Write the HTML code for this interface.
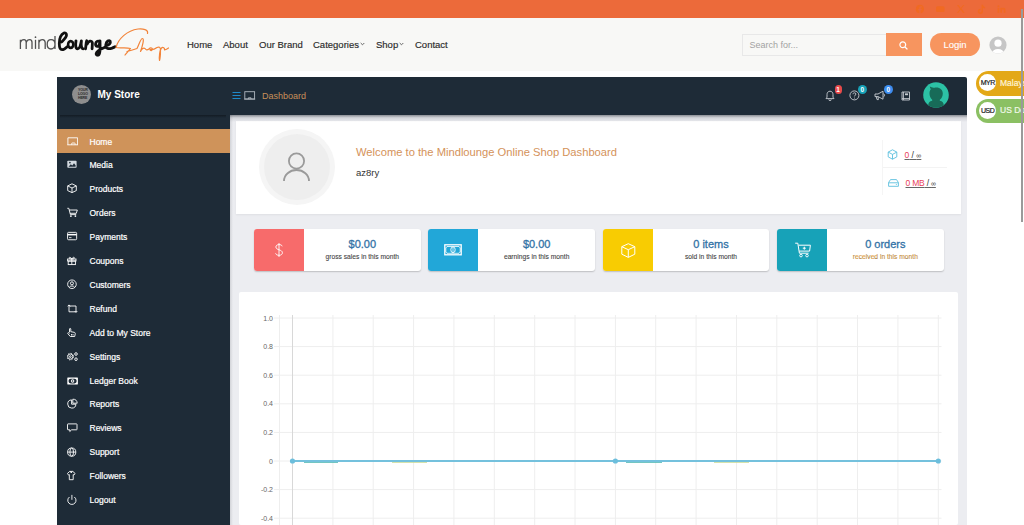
<!DOCTYPE html>
<html><head><meta charset="utf-8">
<style>
*{margin:0;padding:0;box-sizing:border-box}
html,body{width:1024px;height:525px;overflow:hidden;background:#fff;font-family:"Liberation Sans",sans-serif;position:relative}
.a{position:absolute}
.topbar{left:0;top:0;width:1024px;height:18px;background:#EC6A3A}
.header{left:0;top:18px;width:1024px;height:53px;background:#F8F8F6}
.nav{top:38.5px;font-size:9.5px;line-height:11px;color:#2a2a2a;white-space:nowrap;-webkit-text-stroke:0.15px #2a2a2a}
.dash{left:57px;top:77px;width:910px;height:448px;background:#1E2B37;border-radius:0 2px 0 0}
.content{left:230px;top:115px;width:737px;height:410px;background:#ECEDF1}
.side{left:57px;top:115px;width:173px;height:410px;background:#1E2B37}
.mi{left:0;width:173px;height:24px;color:#fff;font-size:8.5px;-webkit-text-stroke:0.2px #fff}
.mi span{position:absolute;left:32.5px;top:8.6px;line-height:1}
.mi svg{position:absolute;left:10px;top:6.5px}
.hl{background:#CF935A}
.card{background:#fff}
.val{top:237.7px;width:116.6px;text-align:center;font-size:11px;line-height:12px;color:#3272A6;-webkit-text-stroke:0.3px #3272A6}
.sub{top:252.5px;width:116.6px;text-align:center;font-size:6.7px;line-height:8px;color:#444;-webkit-text-stroke:0.1px #444}
.stc{box-shadow:0 1px 1px rgba(0,0,0,0.18)}
</style></head><body>
<div class="a topbar"></div>
<div class="a header"></div>
<!-- social -->
<svg class="a" style="left:910px;top:0" width="100" height="18" viewBox="910 0 100 18" fill="#F06A22">
<path d="M920 4.8a4.3 4.3 0 0 0-0.8 8.5v-3h-1.1V9h1.1V8c0-1.1 0.6-1.8 1.7-1.8h0.9v1.2h-0.6c-0.5 0-0.6 0.3-0.6 0.6V9h1.2l-0.2 1.3h-1v3a4.3 4.3 0 0 0-0.6-8.5z"/>
<rect x="936" y="6.3" width="8.6" height="5.8" rx="1.5"/>
<path d="M957 5h1.6l2.2 3 2.3-3h1.3l-2.9 3.6 3.2 4.3h-1.6l-2.4-3.2-2.5 3.2h-1.3l3.1-3.8z"/>
<path d="M981.5 4.8h1.5c0.2 1.3 1 2 2.1 2.1v1.5c-0.8 0-1.5-0.3-2.1-0.7v3.6a2.6 2.6 0 1 1-2.6-2.6v1.5a1.1 1.1 0 1 0 1.1 1.1z"/>
<path d="M997.6 7.8h1.7v5h-1.7z M998.45 5.2a0.95 0.95 0 1 1 0 1.9a0.95 0.95 0 1 1 0-1.9z M1000.3 7.8h1.6v0.7c0.3-0.5 0.9-0.8 1.6-0.8 1.3 0 1.9 0.8 1.9 2.3v2.8h-1.7v-2.5c0-0.6-0.2-1-0.8-1s-0.9 0.4-0.9 1v2.5h-1.7z"/>
</svg>

<!-- logo -->
<svg class="a" style="left:0;top:18px" width="180" height="52" viewBox="0 18 180 52">
<g fill="none" stroke="#505050" stroke-width="1.3">
<path d="M20.4 48.9V39.8M20.4 42.5C21 40.5 22.5 39.6 24 39.6C25.5 39.6 26.2 40.8 26.2 42.5V48.9M26.2 42.5C26.8 40.5 28.3 39.6 29.8 39.6C31.3 39.6 32 40.8 32 42.5V48.9"/>
<path d="M35.5 48.9V39.8"/>
<path d="M38.9 48.9V39.8M38.9 42.5C39.5 40.5 41 39.6 42.5 39.6C44.2 39.6 45.2 40.8 45.2 42.8V48.9"/>
<path d="M55 36V48.9M55 44.3C55 41.5 53.3 39.6 51 39.6C48.6 39.6 47.2 41.6 47.2 44.3C47.2 47 48.6 49 51 49C53.3 49 55 47 55 44.3"/>
</g>
<circle cx="35.5" cy="37.2" r="0.85" fill="#505050"/>
<g fill="none" stroke="#111" stroke-width="2.8" stroke-linecap="round" stroke-linejoin="round">
<path d="M61.5 42C63.5 40 66.5 37.5 66.5 35C66.5 33 65 32.5 64 33C61 34.5 59.3 39 59.3 43.5C59.3 47.5 60.5 49.7 62 49.7C63.5 49.7 65.5 48.5 67.5 46.5"/>
<ellipse cx="70.7" cy="44.5" rx="2.6" ry="3.4" stroke-width="2.6"/>
<path d="M76 40.8C75.5 44 75.3 48.8 77.6 48.8C79.8 48.8 80.8 44.5 81.4 40.8C81 44 81 48.8 83.4 48.8"/>
<path d="M85.5 48.8C86 46 86 42.5 86.7 40.8C87.3 42 87.2 43.5 87.2 44C88.2 41 91.8 39.8 92.4 43L92.1 48.8"/>
<path d="M99 41.2C95.5 40 94.4 46.3 97 46.3C98.8 46.3 99.8 43 100 40.8C100 44.5 100.4 50 99.6 53C98.7 56 95.8 55.8 96.2 53.4C96.7 50.8 101 49 105 47.2"/>
<path d="M106.3 45.3C109 45 111 43.2 110.2 41.2C109.3 39.6 106.2 41 105.8 44.8C105.4 48.4 108.2 49.5 112 48.1C113.5 47.5 114.5 47 115 46.7"/>
</g>
<path d="M147.5 33.5C148.5 29.5 143 28.5 138 29C127 30.5 118 39 116 47.5C120 48.5 126 47 130.5 48.5C128.5 51 126 53.5 125 55M127 51.5C131 50.5 134 49.5 137 48.5C139 45 140.5 38.5 142.5 38.5C144.5 38.5 142.5 46 140.5 51.5C142 48.5 143.5 47.5 145 48.5C146 50 147 50.5 149 49C150 47.5 152 47.5 152.5 49C152.5 51 150 51 150 49.5C152 50 155 49 157 47.5C159 46.5 160.5 47 160.5 50C160.5 54 160 59 159.5 60.5C159 58 159.5 50 161.5 48C163 46.5 165 48 164.5 50C166 49.5 167 49 168.5 48" fill="none" stroke="#F2843A" stroke-width="1.2" stroke-linecap="round" stroke-linejoin="round"/>
</svg>
<!-- nav -->
<div class="a nav" style="left:187px">Home</div>
<div class="a nav" style="left:223px">About</div>
<div class="a nav" style="left:259px">Our Brand</div>
<div class="a nav" style="left:313px">Categories</div>
<div class="a nav" style="left:376px">Shop</div>
<div class="a nav" style="left:415px">Contact</div>
<!-- search -->
<div class="a" style="left:742px;top:33.5px;width:145px;height:22.5px;background:#F8F8F6;border:1px solid #E8E8E8"></div>
<div class="a" style="left:749.5px;top:40px;font-size:9px;line-height:11px;color:#A2A2A2">Search for...</div>
<div class="a" style="left:886px;top:33.2px;width:35.5px;height:22.8px;background:#F7955F"></div>
<div class="a" style="left:930px;top:33px;width:50px;height:23px;background:#F7955F;border-radius:12px;color:#fff;font-size:9.5px;text-align:center;line-height:24px;-webkit-text-stroke:0.1px #fff">Login</div>
<svg class="a" style="left:989px;top:35.5px" width="18" height="18" viewBox="0 0 18 18"><defs><clipPath id="hc"><circle cx="9" cy="9" r="8.6"/></clipPath></defs><circle cx="9" cy="9" r="8.6" fill="#C6C6C6"/><g clip-path="url(#hc)" fill="#fff"><circle cx="9" cy="7.2" r="3.6"/><ellipse cx="9" cy="17.5" rx="6" ry="4.5"/></g></svg>
<svg class="a" style="left:899px;top:41px" width="9" height="9" viewBox="0 0 9 9"><circle cx="3.8" cy="3.8" r="2.9" fill="none" stroke="#fff" stroke-width="1.2"/><path d="M6 6l2.4 2.4" stroke="#fff" stroke-width="1.3"/></svg>
<svg class="a" style="left:360px;top:42px" width="5" height="4" viewBox="0 0 5 4"><path d="M0.7 1l1.8 1.8L4.3 1" fill="none" stroke="#555" stroke-width="0.9"/></svg>
<svg class="a" style="left:399px;top:42px" width="5" height="4" viewBox="0 0 5 4"><path d="M0.7 1l1.8 1.8L4.3 1" fill="none" stroke="#555" stroke-width="0.9"/></svg>
<!-- dashboard -->
<div class="a dash"></div>
<div class="a content"></div>
<div class="a side">
<div class="a" style="left:3px;top:0;width:166px;height:3px;background:linear-gradient(rgba(10,15,20,0.55),rgba(10,15,20,0))"></div>
<div class="a mi hl" style="top:14.00px"><svg width="11" height="12" viewBox="0 0 11 12"><path d="M0.9 8.8V1.8H10.6V8.8M0.3 8.8H11M4.7 8.8V7.6Q4.7 7 5.3 7H7.5Q8.1 7 8.1 7.6V8.8" fill="none" stroke="#fff" stroke-width="0.9"/></svg><span>Home</span></div>
<div class="a mi" style="top:37.90px"><svg width="11" height="12" viewBox="0 0 11 12"><rect x="0.3" y="1.8" width="9.3" height="7" rx="0.8" fill="#D3DAE0"/><path d="M1.5 7.8L3.8 5.2L5.3 6.4L7 4.2L8.6 6.2V7.8Z" fill="#1E2B37"/><circle cx="2.9" cy="3.6" r="0.85" fill="#1E2B37"/></svg><span>Media</span></div>
<div class="a mi" style="top:61.80px"><svg width="11" height="12" viewBox="0 0 11 12"><path d="M5 0.8L9.3 2.9V7.6L5 9.6L0.7 7.6V2.9Z M0.7 2.9L5 5L9.3 2.9M5 5V9.6" fill="none" stroke="#fff" stroke-width="0.9" stroke-linejoin="round"/></svg><span>Products</span></div>
<div class="a mi" style="top:85.70px"><svg width="11" height="12" viewBox="0 0 11 12"><path d="M0.3 1.3H1.8L3.4 7.6H9.2M2.3 3H10.3L9.3 6.3H3.1" fill="none" stroke="#fff" stroke-width="0.9"/><circle cx="3.9" cy="9.1" r="0.9" fill="#fff"/><circle cx="8.4" cy="9.1" r="0.9" fill="#fff"/></svg><span>Orders</span></div>
<div class="a mi" style="top:109.60px"><svg width="11" height="12" viewBox="0 0 11 12"><rect x="0.55" y="1.35" width="9.1" height="7.4" rx="1" fill="none" stroke="#fff" stroke-width="0.9"/><rect x="0.55" y="2.9" width="9.1" height="1.5" fill="#fff"/><rect x="2" y="6.3" width="2.5" height="0.8" fill="#fff"/></svg><span>Payments</span></div>
<div class="a mi" style="top:133.50px"><svg width="11" height="12" viewBox="0 0 11 12"><rect x="0.6" y="4" width="8.4" height="2" fill="none" stroke="#fff" stroke-width="0.9"/><rect x="1.2" y="6" width="7.2" height="3.6" fill="none" stroke="#fff" stroke-width="0.9"/><path d="M4.8 4V9.6M4.8 4C3.8 2 2 1.8 2.2 3.2C2.4 4 4 4 4.8 4C5.6 4 7.2 4 7.4 3.2C7.6 1.8 5.8 2 4.8 4" fill="none" stroke="#fff" stroke-width="0.9"/></svg><span>Coupons</span></div>
<div class="a mi" style="top:157.40px"><svg width="11" height="12" viewBox="0 0 11 12"><circle cx="4.95" cy="5.25" r="4.3" fill="none" stroke="#fff" stroke-width="0.9"/><circle cx="4.95" cy="4.3" r="1.5" fill="none" stroke="#fff" stroke-width="0.9"/><path d="M2.3 8.2C3 6.6 6.9 6.6 7.6 8.2" fill="none" stroke="#fff" stroke-width="0.9"/></svg><span>Customers</span></div>
<div class="a mi" style="top:181.30px"><svg width="11" height="12" viewBox="0 0 11 12"><path d="M2 2V8.8H8.6M2.4 3H9V9.2" fill="none" stroke="#fff" stroke-width="0.9"/><path d="M0.7 3.3L2 1.9L3.3 3.3M7.7 8L9 9.4L10.3 8" fill="none" stroke="#fff" stroke-width="0.9"/></svg><span>Refund</span></div>
<div class="a mi" style="top:205.20px"><svg width="11" height="12" viewBox="0 0 11 12"><path d="M2.5 5.4V2C2.5 1.2 3.8 1.2 3.8 2V4.7L7.1 5.3C8.1 5.5 8.4 6.1 8.2 7.1L7.7 9.5H3.3L0.9 6.7C0.4 6.1 1.1 5.3 1.8 5.8L2.5 6.5M4.5 7V8.5M6 7V8.5" fill="none" stroke="#fff" stroke-width="0.9"/></svg><span>Add to My Store</span></div>
<div class="a mi" style="top:229.10px"><svg width="11" height="12" viewBox="0 0 11 12"><circle cx="3.3" cy="5.6" r="2.6" fill="none" stroke="#fff" stroke-width="0.9"/><circle cx="3.3" cy="5.6" r="3.3" fill="none" stroke="#fff" stroke-width="1" stroke-dasharray="1.1 1.5"/><circle cx="3.3" cy="5.6" r="0.9" fill="none" stroke="#fff" stroke-width="0.9"/><circle cx="9" cy="3" r="1.3" fill="none" stroke="#fff" stroke-width="0.9"/><circle cx="9" cy="8.2" r="1.3" fill="none" stroke="#fff" stroke-width="0.9"/></svg><span>Settings</span></div>
<div class="a mi" style="top:253.00px"><svg width="11" height="12" viewBox="0 0 11 12"><rect x="0.3" y="2.6" width="10.6" height="6.9" rx="0.4" fill="#fff"/><rect x="1.5" y="3.7" width="8.2" height="4.7" rx="2.3" fill="#1E2B37"/><circle cx="5.6" cy="6.05" r="1.7" fill="#fff"/><circle cx="5.6" cy="6.05" r="0.8" fill="#1E2B37"/></svg><span>Ledger Book</span></div>
<div class="a mi" style="top:276.90px"><svg width="11" height="12" viewBox="0 0 11 12"><path d="M4.6 1.9A4.1 4.1 0 1 0 8.9 6.2H4.6Z" fill="none" stroke="#fff" stroke-width="0.9"/><path d="M5.8 1.2A4.3 4.3 0 0 1 10.2 5.2H5.8Z" fill="none" stroke="#fff" stroke-width="0.9"/></svg><span>Reports</span></div>
<div class="a mi" style="top:300.80px"><svg width="11" height="12" viewBox="0 0 11 12"><path d="M1 1.9H9.5Q10 1.9 10 2.4V7.3Q10 7.8 9.5 7.8H4.6L2.8 9.5V7.8H1Q0.5 7.8 0.5 7.3V2.4Q0.5 1.9 1 1.9Z" fill="none" stroke="#fff" stroke-width="0.9"/></svg><span>Reviews</span></div>
<div class="a mi" style="top:324.70px"><svg width="11" height="12" viewBox="0 0 11 12"><circle cx="4.7" cy="6.1" r="4.1" fill="none" stroke="#fff" stroke-width="0.9"/><ellipse cx="4.7" cy="6.1" rx="1.8" ry="4.1" fill="none" stroke="#fff" stroke-width="0.9"/><path d="M0.6 6.1H8.8" fill="none" stroke="#fff" stroke-width="0.9"/></svg><span>Support</span></div>
<div class="a mi" style="top:348.60px"><svg width="11" height="12" viewBox="0 0 11 12"><path d="M2.7 1.4H5.8L8.1 3.5L6.9 5.1L6.2 4.6V9.7H2.3V4.6L1.6 5.1L0.4 3.5Z" fill="none" stroke="#fff" stroke-width="0.9" stroke-linejoin="round"/><path d="M3.3 1.4L4.25 3L5.2 1.4" fill="none" stroke="#fff" stroke-width="0.9"/></svg><span>Followers</span></div>
<div class="a mi" style="top:372.50px"><svg width="11" height="12" viewBox="0 0 11 12"><path d="M4.9 0.9V5.8" fill="none" stroke="#fff" stroke-width="0.9"/><path d="M2.5 3A4.1 4.1 0 1 0 7.3 3" fill="none" stroke="#fff" stroke-width="0.9"/></svg><span>Logout</span></div>
</div>
<div class="a" style="left:71.8px;top:84.5px;width:19.5px;height:19.5px;border-radius:50%;background:#8E8E8E"></div>
<div class="a" style="left:78px;top:87.5px;width:7px;font-size:3.6px;line-height:4.4px;font-weight:bold;color:#2a2a2a;text-align:center;letter-spacing:-0.2px">YOUR<br>LOGO<br>HERE</div>
<svg class="a" style="left:232px;top:91px" width="10" height="9" viewBox="0 0 10 9"><path d="M0.5 1.5h8 M0.5 4.5h8 M0.5 7.5h8" stroke="#1E88C8" stroke-width="1.2"/></svg>
<svg class="a" style="left:244px;top:91px" width="12" height="9" viewBox="0 0 12 9"><rect x="0.8" y="0.7" width="9.8" height="7.3" fill="none" stroke="#B0B8C0" stroke-width="0.9"/><path d="M0.2 8.1h11 M4.4 8v-1.2h2.6v1.2" fill="none" stroke="#B0B8C0" stroke-width="0.9"/></svg>
<!-- bar icons -->
<svg class="a" style="left:825px;top:90px" width="10" height="11" viewBox="0 0 10 11"><path d="M5 1.2c-2 0-3 1.6-3 3.4v2.6L1 8.6h8L8 7.2V4.6C8 2.8 7 1.2 5 1.2z M3.8 9.4a1.2 1.2 0 0 0 2.4 0" fill="none" stroke="#C8CDD2" stroke-width="0.9"/></svg>
<div class="a" style="left:834.5px;top:85px;width:7px;height:9px;border-radius:3.5px;background:#E84A4A;color:#fff;font-size:6.5px;font-weight:bold;line-height:9px;text-align:center">1</div>
<svg class="a" style="left:849px;top:90px" width="11" height="11" viewBox="0 0 11 11"><circle cx="5.4" cy="5.4" r="4.5" fill="none" stroke="#C8CDD2" stroke-width="0.9"/><path d="M4 4.2c0-0.9 0.7-1.4 1.5-1.4s1.4 0.5 1.4 1.3c0 1.1-1.4 1.1-1.4 2.3" fill="none" stroke="#C8CDD2" stroke-width="0.9"/><circle cx="5.5" cy="7.9" r="0.5" fill="#C8CDD2"/></svg>
<div class="a" style="left:857.8px;top:85px;width:9.2px;height:9.2px;border-radius:50%;background:#17A2B8;color:#fff;font-size:6.5px;font-weight:bold;line-height:9.2px;text-align:center">0</div>
<svg class="a" style="left:874px;top:90px" width="12" height="11" viewBox="0 0 12 11"><path d="M1 4h3l5-2.8v8L4 6.6H1z M2.2 6.6l0.8 3h1.4L4 6.6 M9.5 3.8a1.6 1.6 0 0 1 0 3" fill="none" stroke="#C8CDD2" stroke-width="0.9"/></svg>
<div class="a" style="left:883.8px;top:85px;width:9.2px;height:9.2px;border-radius:50%;background:#3D8EF0;color:#fff;font-size:6.5px;font-weight:bold;line-height:9.2px;text-align:center">0</div>
<svg class="a" style="left:900.5px;top:90.5px" width="10" height="10" viewBox="0 0 10 10"><path d="M1 1h7.5v8H1z M2.4 1v8 M1 7.6h7.5" fill="none" stroke="#C8CDD2" stroke-width="0.9"/><rect x="4" y="2.4" width="3" height="1.8" fill="#C8CDD2"/></svg>
<svg class="a" style="left:923px;top:82px" width="26" height="26" viewBox="0 0 26 26"><defs><clipPath id="av"><circle cx="13" cy="13" r="12.8"/></clipPath></defs><circle cx="13" cy="13" r="12.8" fill="#2CC2A5"/><g clip-path="url(#av)" fill="#176B58"><path d="M6.8 4.6C8.5 5.8 10.5 5.9 12.5 5.5C16.5 5 19.8 7.5 19.8 11.5C19.8 14.5 18.5 16.5 16.8 17.8L16.8 18.8C19.5 19.3 20.8 21 20.8 23.5L20.8 27L5.2 27L5.2 23.5C5.2 21 6.5 19.3 9.2 18.8L9.2 17.8C7.5 16.5 6.5 14 6.5 11.5C6.5 9.5 7 8.2 7.8 7.2C7.2 6.4 6.9 5.5 6.8 4.6Z"/></g></svg>
<!-- currency pills -->
<div class="a" style="left:976px;top:71px;width:60px;height:25px;border-radius:12.5px;background:#E3A817"></div>
<div class="a" style="left:979.2px;top:74.3px;width:17px;height:17px;border-radius:50%;background:#fff;color:#222;font-size:7px;line-height:17px;text-align:center;letter-spacing:-0.5px;-webkit-text-stroke:0.2px #222">MYR</div>
<div class="a" style="left:1000px;top:78.5px;font-size:8.5px;line-height:8px;color:#FFF3D6;white-space:nowrap;-webkit-text-stroke:0.2px #FFF3D6">Malaysian</div>
<div class="a" style="left:976px;top:99px;width:60px;height:24px;border-radius:12px;background:#8BC063"></div>
<div class="a" style="left:979.2px;top:101.8px;width:17px;height:17px;border-radius:50%;background:#fff;color:#222;font-size:7px;line-height:17px;text-align:center;letter-spacing:-0.5px;-webkit-text-stroke:0.2px #222">USD</div>
<div class="a" style="left:1000px;top:105.5px;font-size:8.5px;line-height:8px;color:#F0F8E8;white-space:nowrap;-webkit-text-stroke:0.2px #F0F8E8">US Dollar</div>
<div class="a" style="left:1021px;top:9px;width:2px;height:213px;background:#9A9A9A"></div>
<div class="a" style="left:97.5px;top:89px;font-size:10px;font-weight:bold;color:#fff">My Store</div>
<div class="a" style="left:262px;top:91px;font-size:9px;color:#C8905A">Dashboard</div>
<!-- welcome card -->
<div class="a card" style="left:236px;top:121px;width:725px;height:93px;box-shadow:0 1px 2px rgba(0,0,0,0.06)"></div>
<div class="a" style="left:230px;top:115px;width:3px;height:410px;background:linear-gradient(90deg,rgba(20,25,35,0.12),rgba(20,25,35,0))"></div>
<div class="a" style="left:259px;top:129px;width:76px;height:76px;border-radius:50%;background:#F5F5F5"></div>
<div class="a" style="left:264px;top:134px;width:66px;height:66px;border-radius:50%;background:#EEEEEE"></div>
<div class="a" style="left:356px;top:146px;font-size:11.2px;color:#D4925A">Welcome to the Mindlounge Online Shop Dashboard</div>
<div class="a" style="left:356px;top:167px;font-size:9.5px;color:#333">az8ry</div>
<div class="a" style="left:230px;top:115px;width:737px;height:7px;background:linear-gradient(rgba(20,25,35,0.45),rgba(20,25,35,0.12) 40%,rgba(20,25,35,0))"></div>
<!-- stat cards -->
<div class="a card" style="left:254px;top:229px;width:166.6px;height:42px;border-radius:3px;box-shadow:0 1px 1.5px rgba(0,0,0,0.2)"></div>
<div class="a card" style="left:428.35px;top:229px;width:166.6px;height:42px;border-radius:3px;box-shadow:0 1px 1.5px rgba(0,0,0,0.2)"></div>
<div class="a card" style="left:602.7px;top:229px;width:166.6px;height:42px;border-radius:3px;box-shadow:0 1px 1.5px rgba(0,0,0,0.2)"></div>
<div class="a card" style="left:777.05px;top:229px;width:166.6px;height:42px;border-radius:3px;box-shadow:0 1px 1.5px rgba(0,0,0,0.2)"></div>

<!-- avatar person -->
<svg class="a" style="left:259px;top:129px" width="76" height="76" viewBox="0 0 76 76"><circle cx="37.5" cy="32" r="7.6" fill="none" stroke="#9A9A9A" stroke-width="1.8"/><path d="M25 52a12.5 11 0 0 1 25 0" fill="none" stroke="#9A9A9A" stroke-width="1.8"/></svg>
<!-- right stats -->
<div class="a" style="left:882px;top:140px;width:1px;height:55px;background:#F5F5F5"></div>
<div class="a" style="left:883px;top:167px;width:64px;height:1px;background:#F3F3F3"></div>
<svg class="a" style="left:887px;top:149px" width="11" height="11" viewBox="0 0 11 11"><path d="M5.5 0.8l4.3 2.3v4.8L5.5 10.2 1.2 7.9V3.1z M1.2 3.1l4.3 2.3 4.3-2.3 M5.5 5.4v4.8" fill="none" stroke="#5BC0DE" stroke-width="0.9"/></svg>
<svg class="a" style="left:887.5px;top:179px" width="11" height="8" viewBox="0 0 11 8"><path d="M0.6 3.5L2.5 0.6h6l1.9 2.9v3.8H0.6z M0.6 3.8h9.8" fill="none" stroke="#5BC0DE" stroke-width="0.9"/><circle cx="8.3" cy="5.6" r="0.5" fill="#5BC0DE"/></svg>
<div class="a" style="left:904.5px;top:151px;font-size:8.5px;line-height:1;color:#333;white-space:nowrap;text-decoration:underline;text-decoration-color:#666;text-underline-offset:1px;text-decoration-skip-ink:none"><span style="color:#E8415A">0</span> / <span style="font-size:7px">&#8734;</span></div>
<div class="a" style="left:905.5px;top:179px;font-size:8.5px;line-height:1;color:#333;white-space:nowrap;text-decoration:underline;text-decoration-color:#666;text-underline-offset:1px;text-decoration-skip-ink:none;letter-spacing:-0.2px"><span style="color:#E8415A">0 MB</span> / <span style="font-size:7px">&#8734;</span></div>
<!-- stat card colored blocks -->
<div class="a" style="left:254px;top:229px;width:50px;height:42px;background:#F76B6B;border-radius:3px 0 0 3px"></div>
<div class="a" style="left:428.35px;top:229px;width:50px;height:42px;background:#22A7D8;border-radius:3px 0 0 3px"></div>
<div class="a" style="left:602.7px;top:229px;width:50px;height:42px;background:#F8CC02;border-radius:3px 0 0 3px"></div>
<div class="a" style="left:777.05px;top:229px;width:50px;height:42px;background:#17A2B8;border-radius:3px 0 0 3px"></div>
<div class="a val" style="left:304px">$0.00</div><div class="a sub" style="left:304px">gross sales in this month</div>
<div class="a val" style="left:478.35px">$0.00</div><div class="a sub" style="left:478.35px">earnings in this month</div>
<div class="a val" style="left:652.7px">0 items</div><div class="a sub" style="left:652.7px">sold in this month</div>
<div class="a val" style="left:827.05px">0 orders</div><div class="a sub" style="left:827.05px;color:#E8A33C">received in this month</div>

<!-- stat icons -->
<svg class="a" style="left:272px;top:242px" width="14" height="16" viewBox="0 0 14 16"><path d="M7 1v14 M10.2 4.3C9.8 3 8.6 2.6 7 2.6 5.2 2.6 3.9 3.5 3.9 5c0 3.4 6.5 2.3 6.5 5.8 0 1.6-1.4 2.5-3.4 2.5-1.7 0-3-0.6-3.4-2" fill="none" stroke="#fff" stroke-width="0.9"/></svg>
<svg class="a" style="left:444px;top:244px" width="18" height="12" viewBox="0 0 18 12"><rect x="0.8" y="0.8" width="16.4" height="10" fill="none" stroke="#fff" stroke-width="1.3"/><path d="M3 2.5a1.5 1.5 0 0 1-1.2 1.2v4.4A1.5 1.5 0 0 1 3 9.3h12a1.5 1.5 0 0 1 1.2-1.2V3.7A1.5 1.5 0 0 1 15 2.5z" fill="none" stroke="#fff" stroke-width="0.8"/><ellipse cx="9" cy="5.8" rx="2.2" ry="2.9" fill="none" stroke="#fff" stroke-width="0.9"/><path d="M9 3.6v4.5" stroke="#fff" stroke-width="0.7"/></svg>
<svg class="a" style="left:620.5px;top:243px" width="15" height="15" viewBox="0 0 15 15"><path d="M7.3 0.7l6.5 3v7.5l-6.5 3.2-6.5-3.2V3.7z M0.8 3.7l6.5 3 6.5-3 M7.3 6.7v7.6" fill="none" stroke="#fff" stroke-width="1" stroke-linejoin="round"/></svg>
<svg class="a" style="left:795px;top:242px" width="16" height="16" viewBox="0 0 16 16"><path d="M0.2 1.2h2.6l1.6 10h9.2 M3.6 3.2h11.8l-0.8 5.9H4.2" fill="none" stroke="#fff" stroke-width="1"/><circle cx="6" cy="13.6" r="1.3" fill="none" stroke="#fff" stroke-width="0.9"/><circle cx="12" cy="13.6" r="1.3" fill="none" stroke="#fff" stroke-width="0.9"/><path d="M9.3 4.7v3 M7.8 6.2h3" stroke="#fff" stroke-width="1"/></svg>
<!-- chart card -->
<div class="a card" style="left:239px;top:292px;width:719px;height:233px;border-radius:2px"></div>
<svg class="a" style="left:0;top:0" width="1024" height="525" viewBox="0 0 1024 525" font-family="Liberation Sans, sans-serif"><line x1="274" y1="318.0" x2="941.5" y2="318.0" stroke="#EEEEEE" stroke-width="1"/><text x="273" y="320.5" text-anchor="end" font-size="7" fill="#666">1.0</text><line x1="274" y1="346.6" x2="941.5" y2="346.6" stroke="#EEEEEE" stroke-width="1"/><text x="273" y="349.1" text-anchor="end" font-size="7" fill="#666">0.8</text><line x1="274" y1="375.2" x2="941.5" y2="375.2" stroke="#EEEEEE" stroke-width="1"/><text x="273" y="377.7" text-anchor="end" font-size="7" fill="#666">0.6</text><line x1="274" y1="403.8" x2="941.5" y2="403.8" stroke="#EEEEEE" stroke-width="1"/><text x="273" y="406.3" text-anchor="end" font-size="7" fill="#666">0.4</text><line x1="274" y1="432.4" x2="941.5" y2="432.4" stroke="#EEEEEE" stroke-width="1"/><text x="273" y="434.9" text-anchor="end" font-size="7" fill="#666">0.2</text><line x1="274" y1="461.0" x2="941.5" y2="461.0" stroke="#EEEEEE" stroke-width="1"/><text x="273" y="463.5" text-anchor="end" font-size="7" fill="#666">0</text><line x1="274" y1="489.6" x2="941.5" y2="489.6" stroke="#EEEEEE" stroke-width="1"/><text x="273" y="492.1" text-anchor="end" font-size="7" fill="#666">-0.2</text><line x1="274" y1="518.2" x2="941.5" y2="518.2" stroke="#EEEEEE" stroke-width="1"/><text x="273" y="520.7" text-anchor="end" font-size="7" fill="#666">-0.4</text><line x1="279.5" y1="315" x2="279.5" y2="525" stroke="#EEEEEE" stroke-width="1"/><line x1="292.5" y1="315" x2="292.5" y2="525" stroke="#D8D8D8" stroke-width="1"/><line x1="332.9" y1="315" x2="332.9" y2="525" stroke="#EEEEEE" stroke-width="1"/><line x1="373.2" y1="315" x2="373.2" y2="525" stroke="#EEEEEE" stroke-width="1"/><line x1="413.6" y1="315" x2="413.6" y2="525" stroke="#EEEEEE" stroke-width="1"/><line x1="453.9" y1="315" x2="453.9" y2="525" stroke="#EEEEEE" stroke-width="1"/><line x1="494.3" y1="315" x2="494.3" y2="525" stroke="#EEEEEE" stroke-width="1"/><line x1="534.7" y1="315" x2="534.7" y2="525" stroke="#EEEEEE" stroke-width="1"/><line x1="575.0" y1="315" x2="575.0" y2="525" stroke="#EEEEEE" stroke-width="1"/><line x1="615.4" y1="315" x2="615.4" y2="525" stroke="#EEEEEE" stroke-width="1"/><line x1="655.7" y1="315" x2="655.7" y2="525" stroke="#EEEEEE" stroke-width="1"/><line x1="696.1" y1="315" x2="696.1" y2="525" stroke="#EEEEEE" stroke-width="1"/><line x1="736.5" y1="315" x2="736.5" y2="525" stroke="#EEEEEE" stroke-width="1"/><line x1="776.8" y1="315" x2="776.8" y2="525" stroke="#EEEEEE" stroke-width="1"/><line x1="817.2" y1="315" x2="817.2" y2="525" stroke="#EEEEEE" stroke-width="1"/><line x1="857.5" y1="315" x2="857.5" y2="525" stroke="#EEEEEE" stroke-width="1"/><line x1="897.9" y1="315" x2="897.9" y2="525" stroke="#EEEEEE" stroke-width="1"/><line x1="938.3" y1="315" x2="938.3" y2="525" stroke="#EEEEEE" stroke-width="1"/><line x1="304" y1="462" x2="338" y2="462" stroke="#45B3AE" stroke-width="1.5"/><line x1="392" y1="462" x2="427" y2="462" stroke="#C8D890" stroke-width="1.5"/><line x1="626" y1="462" x2="662" y2="462" stroke="#45B3AE" stroke-width="1.5"/><line x1="714" y1="462" x2="749" y2="462" stroke="#C8D890" stroke-width="1.5"/><line x1="292.5" y1="461" x2="938.3" y2="461" stroke="#74C1DD" stroke-width="2"/><circle cx="292.5" cy="461" r="2.6" fill="#6CBEDC"/><circle cx="615.4" cy="461" r="2.6" fill="#6CBEDC"/><circle cx="938.3" cy="461" r="2.6" fill="#6CBEDC"/></svg>
</body></html>
